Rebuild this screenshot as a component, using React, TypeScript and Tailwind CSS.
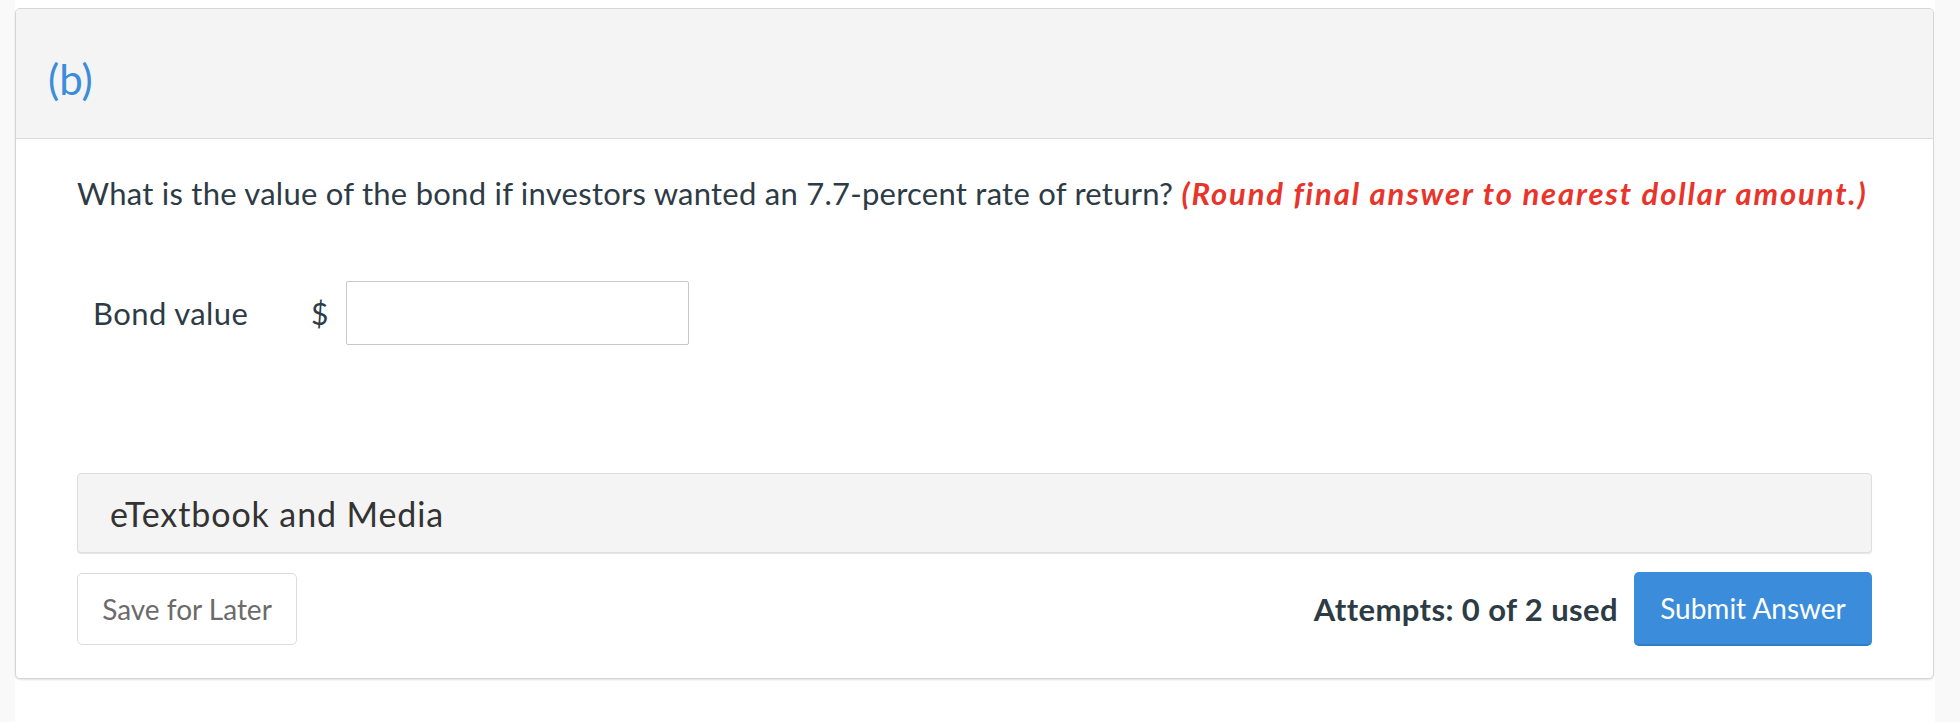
import React from 'react';

const font = { fontFamily: 'Lato, "Open Sans", sans-serif' };

export default function App() {
    return (
        <div className="flex w-[1960px] h-[722px] bg-white" style={font}>
            <div className="w-[15px] bg-[#f9f9f9]" />
            <div className="flex-1 pt-[8px] pr-[1px]">
                <div className="flex flex-col h-[671px] bg-white border border-[#d6d6d6] rounded-[5px] shadow-[0_1px_2px_rgba(0,0,0,0.12)] overflow-hidden">
                    <div className="flex items-center h-[130px] shrink-0 pl-[32px] pt-[10px] bg-[#f4f4f4] border-b border-[#dcdcdc]">
                        <span className="text-[42px] leading-none text-[#3b8ddb]">(b)</span>
                    </div>
                    <div className="flex flex-col flex-1 px-[61px] pt-[33px]">
                        <p className="text-[31px] leading-[42px] tracking-[0.25px] text-[#2d3b45]">
                            What is the value of the bond if investors wanted an 7.7-percent rate of return?{' '}
                            <span className="font-bold italic tracking-[1.85px] text-[#e8342b]">(Round final answer to nearest dollar amount.)</span>
                        </p>
                        <div className="flex items-center mt-[67px] pl-[16px] h-[64px]">
                            <span className="w-[218px] text-[31px] tracking-[0.4px] text-[#2d3b45]">Bond value</span>
                            <span className="w-[35px] text-[30px] text-[#2d3b45]">$</span>
                            <input
                                type="text"
                                className="w-[343px] h-[64px] border border-[#c8c8c8] rounded-[2px] bg-white outline-none"
                            />
                        </div>
                        <div className="flex items-center h-[80px] mt-[128px] pl-[32px] bg-[#f4f4f4] border border-[#dedede] rounded-[4px] shadow-[0_1px_1px_rgba(0,0,0,0.1)]">
                            <span className="text-[34px] tracking-[0.9px] text-[#333]">eTextbook and Media</span>
                        </div>
                        <div className="flex items-center justify-between mt-[19px]">
                            <button className="w-[220px] h-[72px] border border-[#dcdcdc] rounded-[5px] bg-white text-[28px] text-[#6b6b6b]">
                                Save for Later
                            </button>
                            <div className="flex items-center gap-[16px]">
                                <span className="text-[31px] font-bold tracking-[0.4px] text-[#2d3b45]">Attempts: 0 of 2 used</span>
                                <button className="w-[238px] h-[74px] rounded-[5px] bg-[#3b8ddb] border-b-2 border-[#2f7cc6] text-[28px] text-white">
                                    Submit Answer
                                </button>
                            </div>
                        </div>
                    </div>
                </div>
            </div>
            <div className="w-[25px] bg-[#f9f9f9]" />
        </div>
    );
}
